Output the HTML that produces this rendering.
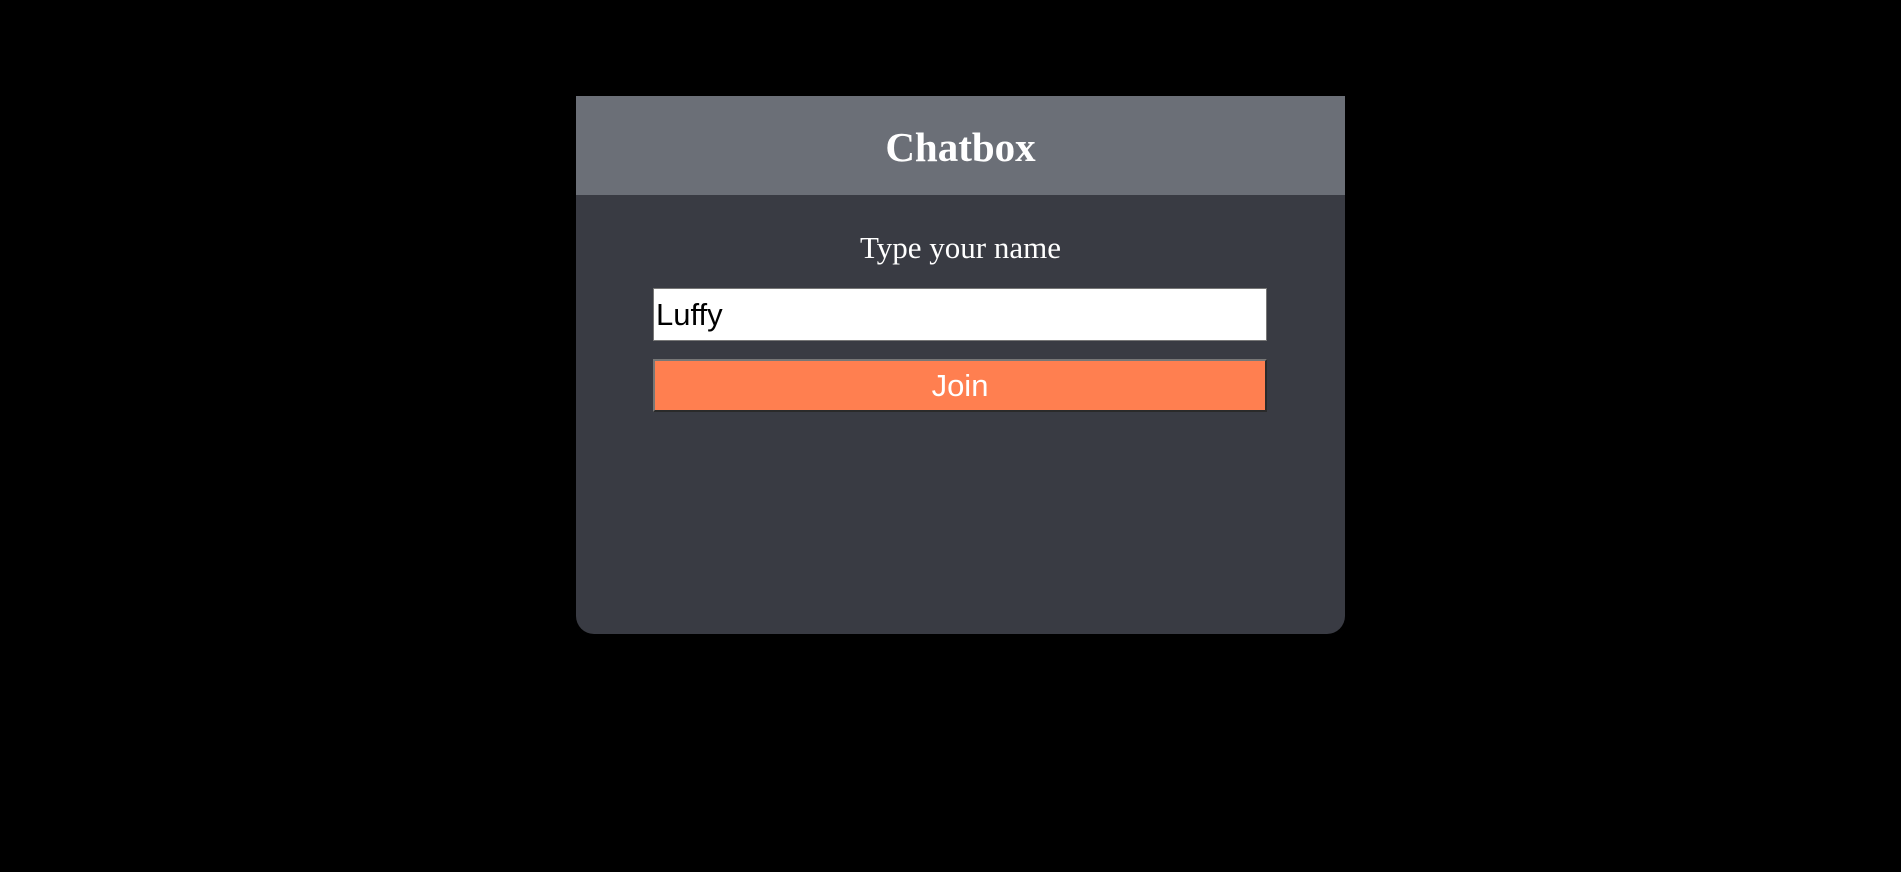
<!DOCTYPE html>
<html><head><style>
html,body{margin:0;padding:0;background:#000;width:1901px;height:872px;overflow:hidden}
.card{position:absolute;left:576px;top:96px;width:769px;height:538px;background:#393b43;border-radius:0 0 18px 18px;overflow:hidden}
.hdr{height:99px;background:#6b6f77;display:flex;align-items:center;justify-content:center;font:bold 41px "Liberation Serif",serif;color:#fff;padding-top:2px;box-sizing:border-box}
.lbl{position:absolute;top:134px;width:100%;text-align:center;font:31px "Liberation Serif",serif;color:#fff}
.inp{position:absolute;left:77px;top:192px;width:610px;height:51px;background:#fff;border:1px solid #777;font:31px "Liberation Sans",sans-serif;color:#000;line-height:52px;padding-left:2px;box-sizing:content-box}
.btn{position:absolute;left:77px;top:263px;width:614px;height:53px;background:#ff7f50;border:2px solid;border-color:#777 #2a2a2a #2a2a2a #777;font:31px "Liberation Sans",sans-serif;color:#fff;text-align:center;line-height:49px;box-sizing:border-box}
</style></head><body>
<div class="card">
<div class="hdr">Chatbox</div>
<div class="lbl">Type your name</div>
<div class="inp">Luffy</div>
<div class="btn">Join</div>
</div>
</body></html>
